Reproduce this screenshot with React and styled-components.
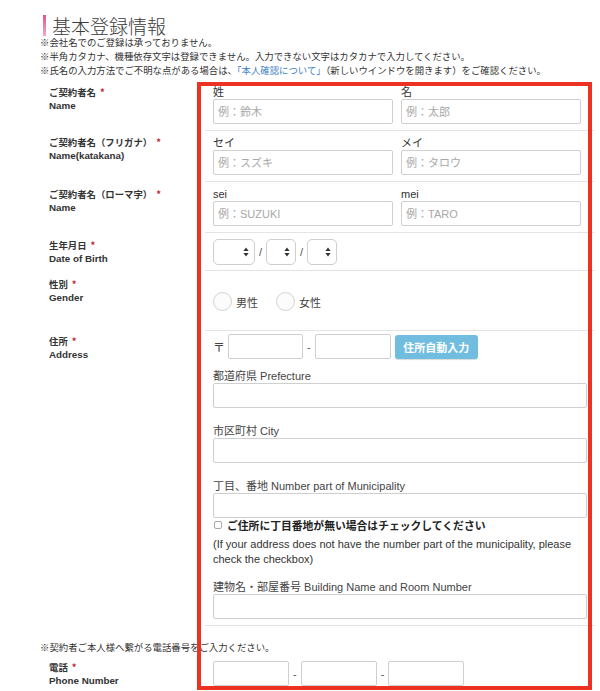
import styled, { createGlobalStyle } from "styled-components";

const GlobalStyle = createGlobalStyle`
  html, body {
    margin: 0;
    padding: 0;
    background: #fff;
    overflow: hidden;
  }
  body {
    font-family: "Liberation Sans", "Noto Sans CJK JP", sans-serif;
    color: #333;
  }
`;

const nameRows = [
  {ja: "ご契約者名", en: "Name", labels: ["姓", "名"], ph: ["例：鈴木", "例：太郎"], pt: 5},
  {ja: "ご契約者名（フリガナ）", en: "Name(katakana)", labels: ["セイ", "メイ"], ph: ["例：スズキ", "例：タロウ"], pt: 5},
  {ja: "ご契約者名（ローマ字）", en: "Name", labels: ["sei", "mei"], ph: ["例：SUZUKI", "例：TARO"], pt: 6},
];

function Label({ja, en, pt}) {
  return (
    <Th $pt={pt}>
      <LabelJa>
        {ja}
        <Required>*</Required>
      </LabelJa>
      <LabelEn>{en}</LabelEn>
    </Th>
  );
}

function SelectField({w}) {
  return (
    <SelectBox $w={w}>
      <Select defaultValue="">
        <option value=""></option>
      </Select>
      <Arrows width="6" height="10" viewBox="0 0 6 10">
        <path d="M3 0.5 L5.6 4 H0.4 Z" fill="#333" />
        <path d="M3 9.5 L5.6 6 H0.4 Z" fill="#333" />
      </Arrows>
    </SelectBox>
  );
}

export default function App() {
  return (
    <>
      <GlobalStyle />
      <Page>
        <Title>
          <TitleBar />
          基本登録情報
        </Title>
        <Notes>
          <p>※会社名でのご登録は承っておりません。</p>
          <p>※半角カタカナ、機種依存文字は登録できません。入力できない文字はカタカナで入力してください。</p>
          <p>
            ※氏名の入力方法でご不明な点がある場合は、<Link href="#">「本人確認について」</Link>
            （新しいウインドウを開きます）をご確認ください。
          </p>
        </Notes>

        <Table>
          {nameRows.map((r, i) => (
            <Row key={r.ja}>
              <Label ja={r.ja} en={r.en} pt={r.pt} />
              <Td $noBorder={i === 0}>
                <Pair>
                  {r.labels.map((l, j) => (
                    <div key={l}>
                      <SubLabel>{l}</SubLabel>
                      <TextInput placeholder={r.ph[j]} />
                    </div>
                  ))}
                </Pair>
              </Td>
            </Row>
          ))}

          <Row>
            <Label ja="生年月日" en="Date of Birth" pt={6} />
            <Td $pb={5}>
              <Inline>
                <SelectField w={42} />
                <Slash>/</Slash>
                <SelectField w={30} />
                <Slash>/</Slash>
                <SelectField w={30} />
              </Inline>
            </Td>
          </Row>

          <Row>
            <Label ja="性別" en="Gender" pt={7} />
            <Td $pt={21} $pb={19}>
              <Inline $gap={18}>
                <Choice>
                  <Radio type="radio" name="gender" />
                  男性
                </Choice>
                <Choice>
                  <Radio type="radio" name="gender" />
                  女性
                </Choice>
              </Inline>
            </Td>
          </Row>

          <Row>
            <Label ja="住所" en="Address" pt={4} />
            <Td $pt={3} $bottomBorder>
              <PostalRow>
                <Postmark>〒</Postmark>
                <TextInput $w={75} />
                <Dash>-</Dash>
                <TextInput $w={76} />
                <AutoButton type="button">住所自動入力</AutoButton>
              </PostalRow>

              <FieldLabel $mt={11}>都道府県 Prefecture</FieldLabel>
              <TextInput />
              <FieldLabel $mt={17}>市区町村 City</FieldLabel>
              <TextInput />
              <FieldLabel $mt={17}>丁目、番地 Number part of Municipality</FieldLabel>
              <TextInput />
              <CheckRow>
                <Check type="checkbox" />
                ご住所に丁目番地が無い場合はチェックしてください
              </CheckRow>
              <HelpText>
                (If your address does not have the number part of the municipality, please
                check the checkbox)
              </HelpText>
              <FieldLabel $mt={15}>建物名・部屋番号 Building Name and Room Number</FieldLabel>
              <TextInput />
            </Td>
          </Row>
        </Table>

        <PhoneNote>※契約者ご本人様へ繋がる電話番号をご入力ください。</PhoneNote>
        <Row>
          <Label ja="電話" en="Phone Number" pt={5} />
          <Td $noBorder>
            <Inline>
              <TextInput $w={76} />
              <Dash>-</Dash>
              <TextInput $w={76} />
              <Dash>-</Dash>
              <TextInput $w={76} />
            </Inline>
          </Td>
        </Row>

        <Highlight />
      </Page>
    </>
  );
}

const Page = styled.div`
  position: relative;
  width: 555px;
  padding: 14px 0 0 40px;
`;

const Title = styled.h1`
  display: flex;
  align-items: center;
  gap: 6px;
  height: 22px;
  margin: 0;
  padding-left: 3px;
  font-family: "Noto Sans CJK JP", sans-serif;
  font-size: 19px;
  font-weight: 300;
  color: #3a3a3a;
`;

const TitleBar = styled.span`
  width: 3px;
  height: 21px;
  background: linear-gradient(#df5399, #f2a8cb);
`;

const Notes = styled.div`
  margin-bottom: 2px;
  font-size: 9.4px;
  line-height: 14px;
  white-space: nowrap;

  p {
    margin: 0;
  }
`;

const Link = styled.a`
  color: #3d7ec6;
  text-decoration: none;
`;

const Table = styled.div`
  display: flex;
  flex-direction: column;
`;

const Row = styled.div`
  display: grid;
  grid-template-columns: 165px 390px;
`;

const Th = styled.div`
  padding: ${p => p.$pt}px 0 0 9px;
  font-size: 9.4px;
  line-height: 14px;
  font-weight: bold;
`;

const LabelJa = styled.div`
  font-family: "Noto Sans CJK JP", sans-serif;
`;

const LabelEn = styled.div`
  font-family: "Liberation Sans", sans-serif;
  font-size: 9.8px;
`;

const Required = styled.span`
  margin-left: 4px;
  color: #c1272d;
`;

const Td = styled.div`
  padding: ${p => p.$pt ?? 6}px 8px ${p => p.$pb ?? 6}px 8px;
  border-top: ${p => (p.$noBorder ? "none" : "1px solid #e4e4e4")};
  border-bottom: ${p => (p.$bottomBorder ? "1px solid #e4e4e4" : "none")};
`;

const Pair = styled.div`
  display: grid;
  grid-template-columns: 180px 180px;
  gap: 8px;
`;

const SubLabel = styled.div`
  font-size: 11px;
  line-height: 13px;
  color: #333;
`;

const TextInput = styled.input`
  display: block;
  box-sizing: border-box;
  width: ${p => (p.$w ? `${p.$w}px` : "100%")};
  height: 25px;
  margin: 0;
  padding: 0 4px;
  border: 1px solid #cfcfcf;
  border-radius: 2px;
  background: #fff;
  font-family: "Liberation Sans", "Noto Sans CJK JP", sans-serif;
  font-size: 11px;
  color: #333;
  outline: none;

  &::placeholder {
    color: #a8a8a8;
  }
`;

const Inline = styled.div`
  display: flex;
  align-items: center;
  gap: ${p => p.$gap ?? 0}px;
`;

const SelectBox = styled.span`
  position: relative;
  display: block;
  width: ${p => p.$w}px;
  height: 26px;
`;

const Select = styled.select`
  box-sizing: border-box;
  width: 100%;
  height: 100%;
  margin: 0;
  border: 1px solid #cfcfcf;
  border-radius: 5px;
  background: #fff;
  appearance: none;
  -webkit-appearance: none;
  outline: none;
`;

const Arrows = styled.svg`
  position: absolute;
  right: 6px;
  top: 8px;
  pointer-events: none;
`;

const Slash = styled.span`
  margin: 0 4px;
  font-size: 11px;
  color: #555;
`;

const Choice = styled.label`
  display: flex;
  align-items: center;
  gap: 4px;
  font-family: "Noto Sans CJK JP", sans-serif;
  font-size: 11px;
  color: #444;
`;

const Radio = styled.input`
  width: 19px;
  height: 19px;
  margin: 0;
  border: 1px solid #d2d2d2;
  border-radius: 50%;
  background: #fcfcfc;
  appearance: none;
  -webkit-appearance: none;
`;

const PostalRow = styled.div`
  display: flex;
  align-items: flex-end;
  height: 25px;
`;

const Postmark = styled.span`
  align-self: center;
  margin-right: 3px;
  font-size: 12px;
  color: #444;
`;

const Dash = styled.span`
  align-self: center;
  margin: 0 4px;
  font-size: 11px;
  color: #555;
`;

const AutoButton = styled.button`
  width: 83px;
  height: 24px;
  margin-left: 4px;
  padding: 0;
  border: none;
  border-radius: 3px;
  background: #71bddf;
  box-shadow: 0 1px 1px rgba(0, 0, 0, 0.15);
  font-family: "Noto Sans CJK JP", sans-serif;
  font-size: 11px;
  font-weight: bold;
  color: #fff;
`;

const FieldLabel = styled.div`
  margin-top: ${p => p.$mt}px;
  font-size: 11px;
  line-height: 13px;
  color: #444;
`;

const CheckRow = styled.label`
  display: flex;
  align-items: center;
  height: 14px;
  font-family: "Noto Sans CJK JP", sans-serif;
  font-size: 10.8px;
  font-weight: bold;
  color: #222;
`;

const Check = styled.input`
  width: 8px;
  height: 8px;
  margin: 0 5px 0 1px;
  border: 1px solid #aaa;
  border-radius: 2px;
  background: #fff;
  appearance: none;
  -webkit-appearance: none;
`;

const HelpText = styled.div`
  margin-top: 5px;
  font-size: 11px;
  line-height: 14.5px;
  color: #333;
`;

const PhoneNote = styled.div`
  margin-top: 15px;
  font-size: 9.4px;
  line-height: 14px;
`;

const Highlight = styled.div`
  position: absolute;
  left: 197px;
  top: 82px;
  box-sizing: border-box;
  width: 395px;
  height: 608px;
  border: 4px solid #ec3323;
  pointer-events: none;
`;
